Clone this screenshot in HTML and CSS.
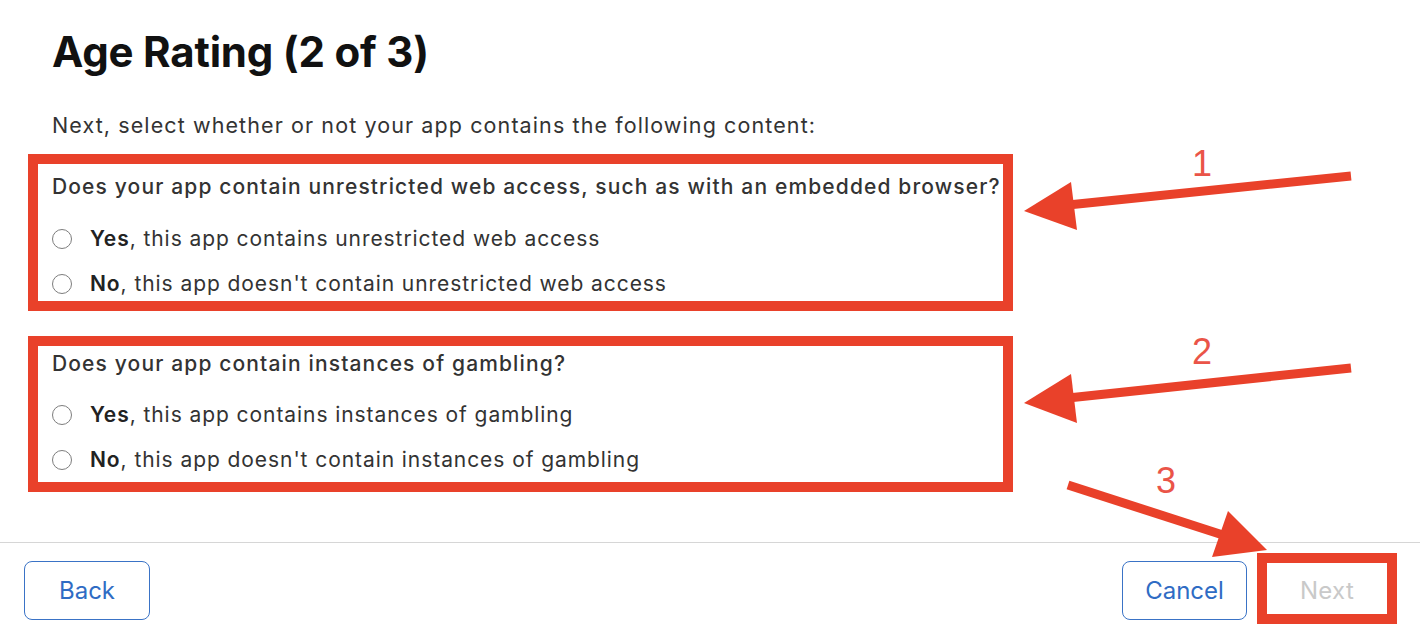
FILE: index.html
```html
<!DOCTYPE html>
<html lang="en">
<head>
<meta charset="utf-8">
<title>Age Rating (2 of 3)</title>
<link rel="stylesheet" href="styles.css">
</head>
<body>
<div class="page">
  <main class="content">
    <h1 class="title">Age Rating (2 of 3)</h1>
    <p class="intro">Next, select whether or not your app contains the following content:</p>

    <section class="mark-box box-one">
      <div class="question">Does your app contain unrestricted web access, such as with an embedded browser?</div>
      <div class="options">
        <label class="option"><span class="radio"></span><span class="opt-text"><b>Yes</b>, this app contains unrestricted web access</span></label>
        <label class="option"><span class="radio"></span><span class="opt-text"><b>No</b>, this app doesn't contain unrestricted web access</span></label>
      </div>
    </section>

    <section class="mark-box box-two">
      <div class="question">Does your app contain instances of gambling?</div>
      <div class="options">
        <label class="option"><span class="radio"></span><span class="opt-text"><b>Yes</b>, this app contains instances of gambling</span></label>
        <label class="option"><span class="radio"></span><span class="opt-text"><b>No</b>, this app doesn't contain instances of gambling</span></label>
      </div>
    </section>
  </main>

  <footer class="footer">
    <button class="btn">Back</button>
    <div class="footer-right">
      <button class="btn">Cancel</button>
      <div class="mark-next"><span class="next-text">Next</span></div>
    </div>
  </footer>

  <svg class="annotations" width="1420" height="632" viewBox="0 0 1420 632">
    <g fill="#e9412a" stroke="none">
      <line x1="1351" y1="176" x2="1068" y2="205" stroke="#e9412a" stroke-width="9"/>
      <polygon points="1024,211 1071,182 1077,230"/>
      <line x1="1351" y1="368" x2="1068" y2="398" stroke="#e9412a" stroke-width="9"/>
      <polygon points="1024,403 1071,374 1077,423"/>
      <line x1="1068" y1="485" x2="1226" y2="536" stroke="#e9412a" stroke-width="9"/>
      <polygon points="1228,511 1267,550 1212,557"/>
    </g>
    <g class="num" fill="#ea5448">
      <text x="1202" y="176" text-anchor="middle">1</text>
      <text x="1202" y="364" text-anchor="middle">2</text>
      <text x="1166" y="493" text-anchor="middle">3</text>
    </g>
  </svg>
</div>
</body>
</html>
```

FILE: styles.css
```css
html, body {
  margin: 0;
  padding: 0;
  height: 632px;
  overflow: hidden;
  background: #ffffff;
}

.page {
  position: relative;
  width: 1420px;
  height: 632px;
  font-family: Inter, "Liberation Sans", Arial, sans-serif;
  color: #333333;
}

.content {
  padding: 28px 0 0 28px;
  height: 514px;
  box-sizing: border-box;
}

.title {
  margin: 0 0 0 24px;
  font-size: 42px;
  line-height: 48px;
  font-weight: 700;
  color: #111111;
  letter-spacing: -0.2px;
}

.intro {
  margin: 37px 0 0 24px;
  font-size: 21.5px;
  line-height: 24px;
  letter-spacing: 1.1px;
  color: #333333;
}

.mark-box {
  width: 985px;
  box-sizing: border-box;
  border: 10px solid #e9412a;
  padding-left: 14px;
}

.box-one {
  margin-top: 17px;
  padding-top: 11px;
  padding-bottom: 5px;
}

.box-two {
  margin-top: 25px;
  padding-top: 6px;
  padding-bottom: 10px;
}

.question {
  font-size: 21px;
  line-height: 24px;
  font-weight: 500;
  letter-spacing: 1.14px;
  color: #333333;
  white-space: nowrap;
}

.options {
  display: flex;
  flex-direction: column;
  gap: 21px;
}

.box-one .options { margin-top: 28px; }
.box-two .options { margin-top: 27px; }

.option {
  display: flex;
  align-items: center;
  height: 24px;
  font-size: 21px;
  line-height: 24px;
  letter-spacing: 0.93px;
  color: #333333;
}

.option b {
  font-weight: 600;
  color: #222222;
}

.radio {
  width: 20px;
  height: 20px;
  box-sizing: border-box;
  border: 1.5px solid #7d7d7d;
  border-radius: 50%;
  margin-right: 18px;
  flex: none;
}

.footer {
  border-top: 1px solid #d6d6d6;
  margin-top: 28px;
  padding: 18px 23px 0 24px;
  display: flex;
  justify-content: space-between;
  align-items: flex-start;
}

.footer-right {
  display: flex;
  align-items: flex-start;
  gap: 10px;
}

.btn {
  width: 126px;
  height: 59px;
  box-sizing: border-box;
  border: 1px solid #3a73c6;
  border-radius: 8px;
  background: #ffffff;
  color: #2f6cc4;
  font-family: Inter, "Liberation Sans", Arial, sans-serif;
  font-size: 24px;
  font-weight: 400;
  padding: 0;
}

.footer-right .btn {
  width: 125px;
}

.mark-next {
  margin-top: -8px;
  width: 140px;
  height: 71px;
  box-sizing: border-box;
  border: 10px solid #e9412a;
  display: flex;
  align-items: center;
  justify-content: center;
}

.next-text {
  font-size: 24px;
  color: #c9c9c9;
  margin-top: 3px;
  letter-spacing: 0.3px;
}

.annotations {
  position: absolute;
  left: 0;
  top: 0;
  pointer-events: none;
}

.num text {
  font-family: "Liberation Sans", Arial, sans-serif;
  font-size: 36px;
}
```
